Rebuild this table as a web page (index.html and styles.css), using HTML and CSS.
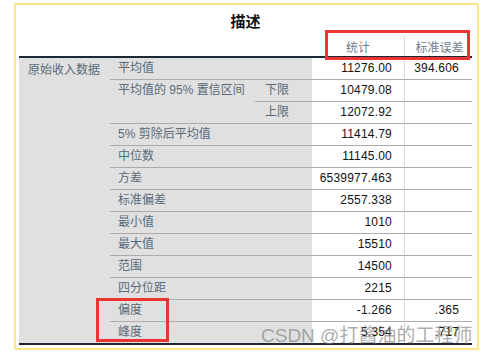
FILE: index.html
```html
<!DOCTYPE html>
<html lang="zh">
<head>
<meta charset="utf-8">
<title>描述</title>
<link rel="stylesheet" href="styles.css">
</head>
<body>
<div class="frame">
  <div class="title">描述</div>
  <div class="grid head">
    <div class="hcell c4">统计</div>
    <div class="hcell c5">标准误差</div>
  </div>
  <div class="grid body">
    <div class="group">原始收入数据</div>

    <div class="lab wide first">平均值</div>
    <div class="val first">11276.00</div>
    <div class="se first">394.606</div>

    <div class="lab tall">平均值的 95% 置信区间</div>
    <div class="lab sub">下限</div>
    <div class="val">10479.08</div>
    <div class="se"></div>

    <div class="lab sub">上限</div>
    <div class="val">12072.92</div>
    <div class="se"></div>

    <div class="lab wide">5% 剪除后平均值</div>
    <div class="val">11414.79</div>
    <div class="se"></div>

    <div class="lab wide">中位数</div>
    <div class="val">11145.00</div>
    <div class="se"></div>

    <div class="lab wide">方差</div>
    <div class="val">6539977.463</div>
    <div class="se"></div>

    <div class="lab wide">标准偏差</div>
    <div class="val">2557.338</div>
    <div class="se"></div>

    <div class="lab wide">最小值</div>
    <div class="val">1010</div>
    <div class="se"></div>

    <div class="lab wide">最大值</div>
    <div class="val">15510</div>
    <div class="se"></div>

    <div class="lab wide">范围</div>
    <div class="val">14500</div>
    <div class="se"></div>

    <div class="lab wide">四分位距</div>
    <div class="val">2215</div>
    <div class="se"></div>

    <div class="lab wide">偏度</div>
    <div class="val">-1.266</div>
    <div class="se">.365</div>

    <div class="lab wide">峰度</div>
    <div class="val">5.354</div>
    <div class="se">.717</div>
  </div>
  <div class="end"></div>
</div>
<div class="mark mark-head"></div>
<div class="mark mark-rows"></div>
<div class="watermark">CSDN @打酱油的工程师</div>
</body>
</html>
```
FILE: styles.css
```css
html, body {
  margin: 0;
  padding: 0;
  background: #ffffff;
}
body {
  font-family: "Liberation Sans", "Noto Sans CJK SC", sans-serif;
  font-size: 12px;
  width: 487px;
  height: 358px;
  overflow: hidden;
}
.frame {
  margin: 3px 0 0 14px;
  width: 465px;
  height: 347px;
  box-sizing: border-box;
  border: 2px solid #fde58a;
  padding: 0 5px 0 3px;
}
.title {
  height: 31px;
  display: flex;
  align-items: center;
  justify-content: center;
  font-family: "Noto Sans CJK SC", sans-serif;
  font-weight: bold;
  font-size: 15px;
  color: #111;
}
.grid {
  display: grid;
  grid-template-columns: 91px 145px 57px 92px 68px;
}
.head {
  grid-template-rows: 20px;
  border-bottom: 2px solid #1c2833;
}
.hcell {
  display: flex;
  align-items: center;
  justify-content: center;
  font-family: "Noto Sans CJK SC", sans-serif;
  color: #6e7d8a;
  font-size: 12px;
}
.head .c4 { grid-column: 4; }
.head .c5 {
  grid-column: 5;
  border-left: 1px solid #d8d8d8;
  padding-left: 2px;
}
.body {
  grid-template-rows: 21px repeat(12, 22px);
}
.body > div {
  box-sizing: border-box;
  border-top: 1px solid #ababab;
  line-height: 21px;
  white-space: nowrap;
}
.body > .first { border-top: none; }
.group {
  grid-column: 1;
  grid-row: 1 / 14;
  background: #e0e0e0;
  padding-left: 9px;
  color: #596a79;
  font-family: "Noto Sans CJK SC", sans-serif;
  border-top: none !important;
}
.lab {
  background: #e0e0e0;
  color: #596a79;
  font-family: "Liberation Sans", "Noto Sans CJK SC", sans-serif;
}
.lab.wide {
  grid-column: span 2;
  padding-left: 8px;
}
.lab.tall {
  grid-row: span 2;
  padding-left: 8px;
}
.lab.sub {
  padding-left: 10px;
}
.val {
  text-align: right;
  padding-right: 12px;
  color: #111;
  background: #fff;
  letter-spacing: 0.2px;
}
.se {
  text-align: right;
  padding-right: 13px;
  color: #111;
  background: #fff;
  border-left: 1px solid #d8d8d8;
  letter-spacing: 0.2px;
}
.end {
  border-top: 2px solid #1c2833;
}
.mark {
  position: absolute;
  box-sizing: border-box;
  border: 3px solid #ee3333;
}
.mark-head {
  left: 325px;
  top: 30px;
  width: 145px;
  height: 30px;
}
.mark-rows {
  left: 96px;
  top: 298px;
  width: 73px;
  height: 44px;
}
.watermark {
  position: absolute;
  left: 261px;
  top: 325px;
  font-family: "Liberation Sans", "Noto Sans CJK SC", sans-serif;
  font-size: 19px;
  line-height: 22px;
  color: rgba(125, 125, 125, 0.65);
  white-space: nowrap;
}
```
